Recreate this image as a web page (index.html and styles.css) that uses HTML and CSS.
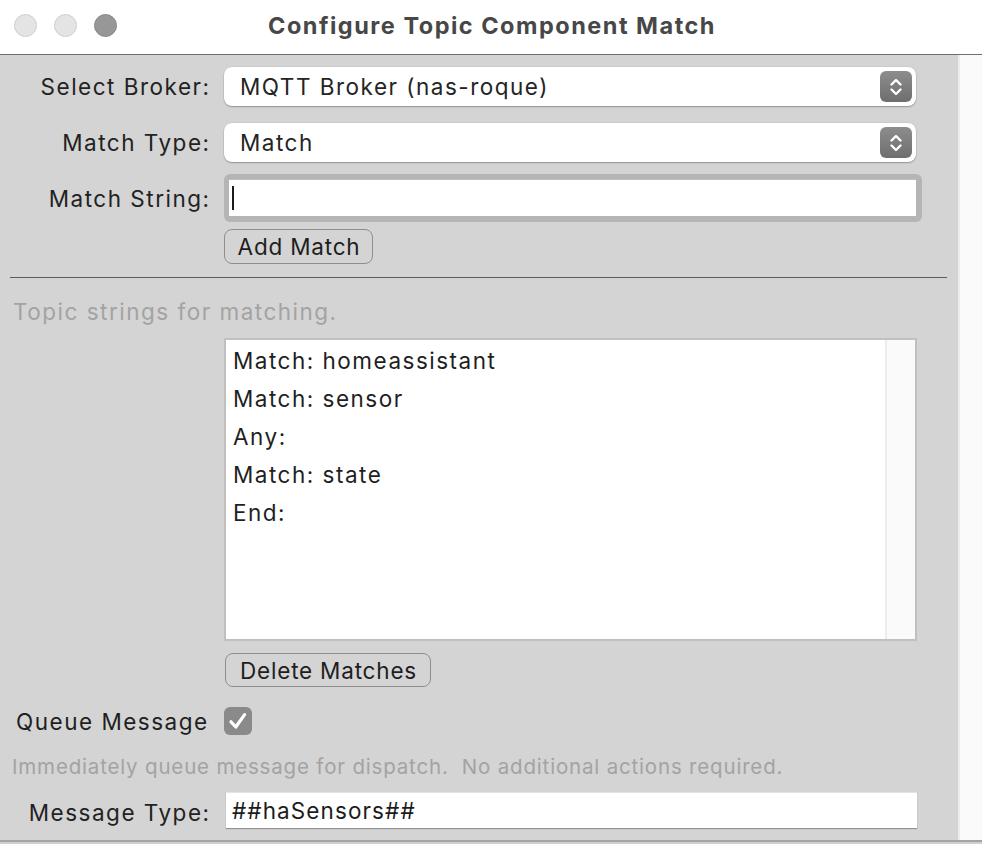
FILE: index.html
```html
<!DOCTYPE html>
<html lang="en">
<head>
<meta charset="utf-8">
<title>Configure Topic Component Match</title>
<link rel="stylesheet" href="styles.css">
</head>
<body>
<div class="window">
  <header class="titlebar">
    <div class="lights">
      <span class="light"></span>
      <span class="light"></span>
      <span class="light light-zoom"></span>
    </div>
    <h1 class="title">Configure Topic Component Match</h1>
  </header>

  <div class="main">
    <div class="content">
      <div class="form-row row-broker">
        <label class="label">Select Broker:</label>
        <div class="popup">
          <span class="popup-text">MQTT Broker (nas-roque)</span>
          <span class="stepper">
            <svg width="14" height="20" viewBox="0 0 14 20"><path d="M2.5 7.5 L7 3 L11.5 7.5 M2.5 12.5 L7 17 L11.5 12.5" fill="none" stroke="#fff" stroke-width="2.4" stroke-linecap="round" stroke-linejoin="round"/></svg>
          </span>
        </div>
      </div>

      <div class="form-row row-type">
        <label class="label">Match Type:</label>
        <div class="popup">
          <span class="popup-text">Match</span>
          <span class="stepper">
            <svg width="14" height="20" viewBox="0 0 14 20"><path d="M2.5 7.5 L7 3 L11.5 7.5 M2.5 12.5 L7 17 L11.5 12.5" fill="none" stroke="#fff" stroke-width="2.4" stroke-linecap="round" stroke-linejoin="round"/></svg>
          </span>
        </div>
      </div>

      <div class="form-row row-string">
        <label class="label">Match String:</label>
        <div class="focus-ring">
          <div class="field field-focused"><span class="caret"></span></div>
        </div>
      </div>

      <div class="button-row row-add">
        <button class="push">Add Match</button>
      </div>

      <hr class="separator">

      <p class="hint hint-topics">Topic strings for matching.</p>

      <div class="button-row row-list">
        <div class="listbox">
          <ul class="list-items">
            <li>Match: homeassistant</li>
            <li>Match: sensor</li>
            <li>Any:</li>
            <li>Match: state</li>
            <li>End:</li>
          </ul>
          <div class="list-scroll"></div>
        </div>
      </div>

      <div class="button-row row-delete">
        <button class="push push-wide">Delete Matches</button>
      </div>

      <div class="check-row">
        <span class="check-label">Queue Message</span>
        <span class="checkbox">
          <svg width="22" height="22" viewBox="0 0 22 22"><path d="M4 11.8 L8.8 17 L17.6 4.6" fill="none" stroke="#fff" stroke-width="3.2" stroke-linecap="round" stroke-linejoin="round"/></svg>
        </span>
      </div>

      <p class="hint hint-queue">Immediately queue message for dispatch.&nbsp; No additional actions required.</p>

      <div class="form-row row-msgtype">
        <label class="label">Message Type:</label>
        <div class="field field-plain">##haSensors##</div>
      </div>
    </div>
    <div class="scroll-track"></div>
  </div>
  <div class="footer"></div>
</div>
</body>
</html>
```
FILE: styles.css
```css
* { box-sizing: border-box; }

html, body {
  margin: 0;
  padding: 0;
  background: #d4d4d4;
}

body {
  width: 982px;
  height: 844px;
  overflow: hidden;
  font-family: Inter, "Liberation Sans", sans-serif;
  font-size: 22.5px;
  letter-spacing: 1.5px;
  color: #1f1f1f;
}

.window {
  display: flex;
  flex-direction: column;
  height: 844px;
}

/* title bar */
.titlebar {
  height: 55px;
  background: #ffffff;
  border-bottom: 1.5px solid #6f6f6f;
  display: flex;
  align-items: flex-start;
  position: relative;
  flex: none;
}

.lights {
  display: flex;
  gap: 17px;
  padding-left: 14px;
  padding-top: 14px;
}

.light {
  width: 23px;
  height: 23px;
  border-radius: 50%;
  background: #e4e4e4;
  border: 1px solid #cfcfcf;
}

.light-zoom {
  background: #979797;
  border-color: #888888;
}

.title {
  position: absolute;
  left: 0;
  right: 0;
  top: 0;
  height: 50px;
  margin: 0;
  display: flex;
  align-items: center;
  justify-content: center;
  font-size: 23.5px;
  font-weight: 700;
  letter-spacing: 1.5px;
  color: #474747;
  padding-left: 2px;
  pointer-events: none;
}

/* body area */
.main {
  flex: 1;
  display: flex;
  min-height: 0;
}

.content {
  width: 958px;
  padding-top: 12px;
}

.scroll-track {
  width: 24px;
  background: #fafafa;
  border-left: 2px solid #ececec;
}

.footer {
  height: 4px;
  flex: none;
  border-top: 2px solid #a4a4a4;
  background: #cfcfcf;
}

/* form rows */
.form-row {
  display: grid;
  grid-template-columns: 209px 693px;
  column-gap: 15px;
  align-items: center;
}

.label {
  text-align: right;
  color: #222222;
  white-space: nowrap;
  letter-spacing: 1.5px;
  margin-right: -1.5px;
}

.row-type { margin-top: 17px; }
.row-string { margin-top: 12px; }

.popup {
  height: 39px;
  width: 692px;
  background: #ffffff;
  border-radius: 8px;
  box-shadow: 0 1px 1.5px rgba(0, 0, 0, 0.28), 0 0 0 0.5px rgba(0, 0, 0, 0.08);
  display: flex;
  align-items: center;
  justify-content: space-between;
  padding: 0 4px 0 16px;
}

.popup-text {
  color: #242424;
  white-space: nowrap;
}

.stepper {
  width: 32px;
  height: 31px;
  border-radius: 6px;
  background: linear-gradient(#8d8d8d, #6e6e6e);
  display: flex;
  align-items: center;
  justify-content: center;
}

.stepper svg { display: block; }

.focus-ring {
  width: 698px;
  height: 48px;
  background: #b5b5b5;
  border-radius: 6px;
  padding: 5px 6px 6px 5px;
}

.field {
  background: #ffffff;
  height: 100%;
  display: flex;
  align-items: center;
}

.field-focused {
  border-top: 1px solid #bdbdbd;
  padding-left: 3px;
}

.caret {
  width: 2px;
  height: 24px;
  background: #1c1c1c;
}

.field-plain {
  height: 36px;
  width: 691px;
  margin-left: 2px;
  padding-left: 6px;
  border-top: 1px solid #e4e4e4;
  box-shadow: 0 1px 1px rgba(0, 0, 0, 0.3);
  color: #1c1c1c;
  letter-spacing: 1.1px;
}

/* buttons */
.button-row {
  padding-left: 224px;
}

.row-add { margin-top: 7px; }

.push {
  font: inherit;
  letter-spacing: 0.8px;
  color: #1e1e1e;
  height: 35px;
  width: 149px;
  padding: 0 0 0 1px;
  background: transparent;
  border: 1.5px solid #8f8f8f;
  border-radius: 8px;
  display: flex;
  align-items: center;
  justify-content: center;
}

.push-wide { width: 206px; height: 34px; }

.row-delete {
  margin-top: 12px;
  padding-left: 225px;
}

.separator {
  margin: 13px 0 0 10px;
  width: 937px;
  height: 0;
  border: 0;
  border-top: 1.5px solid #5c5c5c;
}

.hint {
  margin: 0;
  color: #a3a3a3;
  white-space: nowrap;
}

.hint-topics {
  margin-top: 21px;
  padding-left: 13px;
  line-height: 26px;
}

.hint-queue {
  margin-top: 20px;
  padding-left: 12px;
  font-size: 20.5px;
  letter-spacing: 0.82px;
  line-height: 24px;
}

/* list box */
.row-list { margin-top: 13px; }

.listbox {
  width: 693px;
  height: 303px;
  background: #ffffff;
  border: 2px solid #c0c0c0;
  display: flex;
}

.list-items {
  flex: 1;
  list-style: none;
  margin: 0;
  padding: 2px 0 0 7px;
}

.list-items li {
  height: 38px;
  line-height: 38px;
  color: #1f1f1f;
}

.list-scroll {
  width: 30px;
  background: #fafafa;
  border-left: 2px solid #ececec;
}

/* checkbox row */
.check-row {
  margin-top: 20px;
  display: flex;
  align-items: center;
  height: 28px;
  padding-left: 16px;
}

.check-label {
  width: 208px;
  color: #1f1f1f;
}

.checkbox {
  width: 28px;
  height: 28px;
  border-radius: 6px;
  background: #8a8a8a;
  display: flex;
  align-items: center;
  justify-content: center;
}

.checkbox svg { display: block; }

.row-msgtype { margin-top: 13px; }
.row-msgtype .label { padding-top: 4px; }
```
